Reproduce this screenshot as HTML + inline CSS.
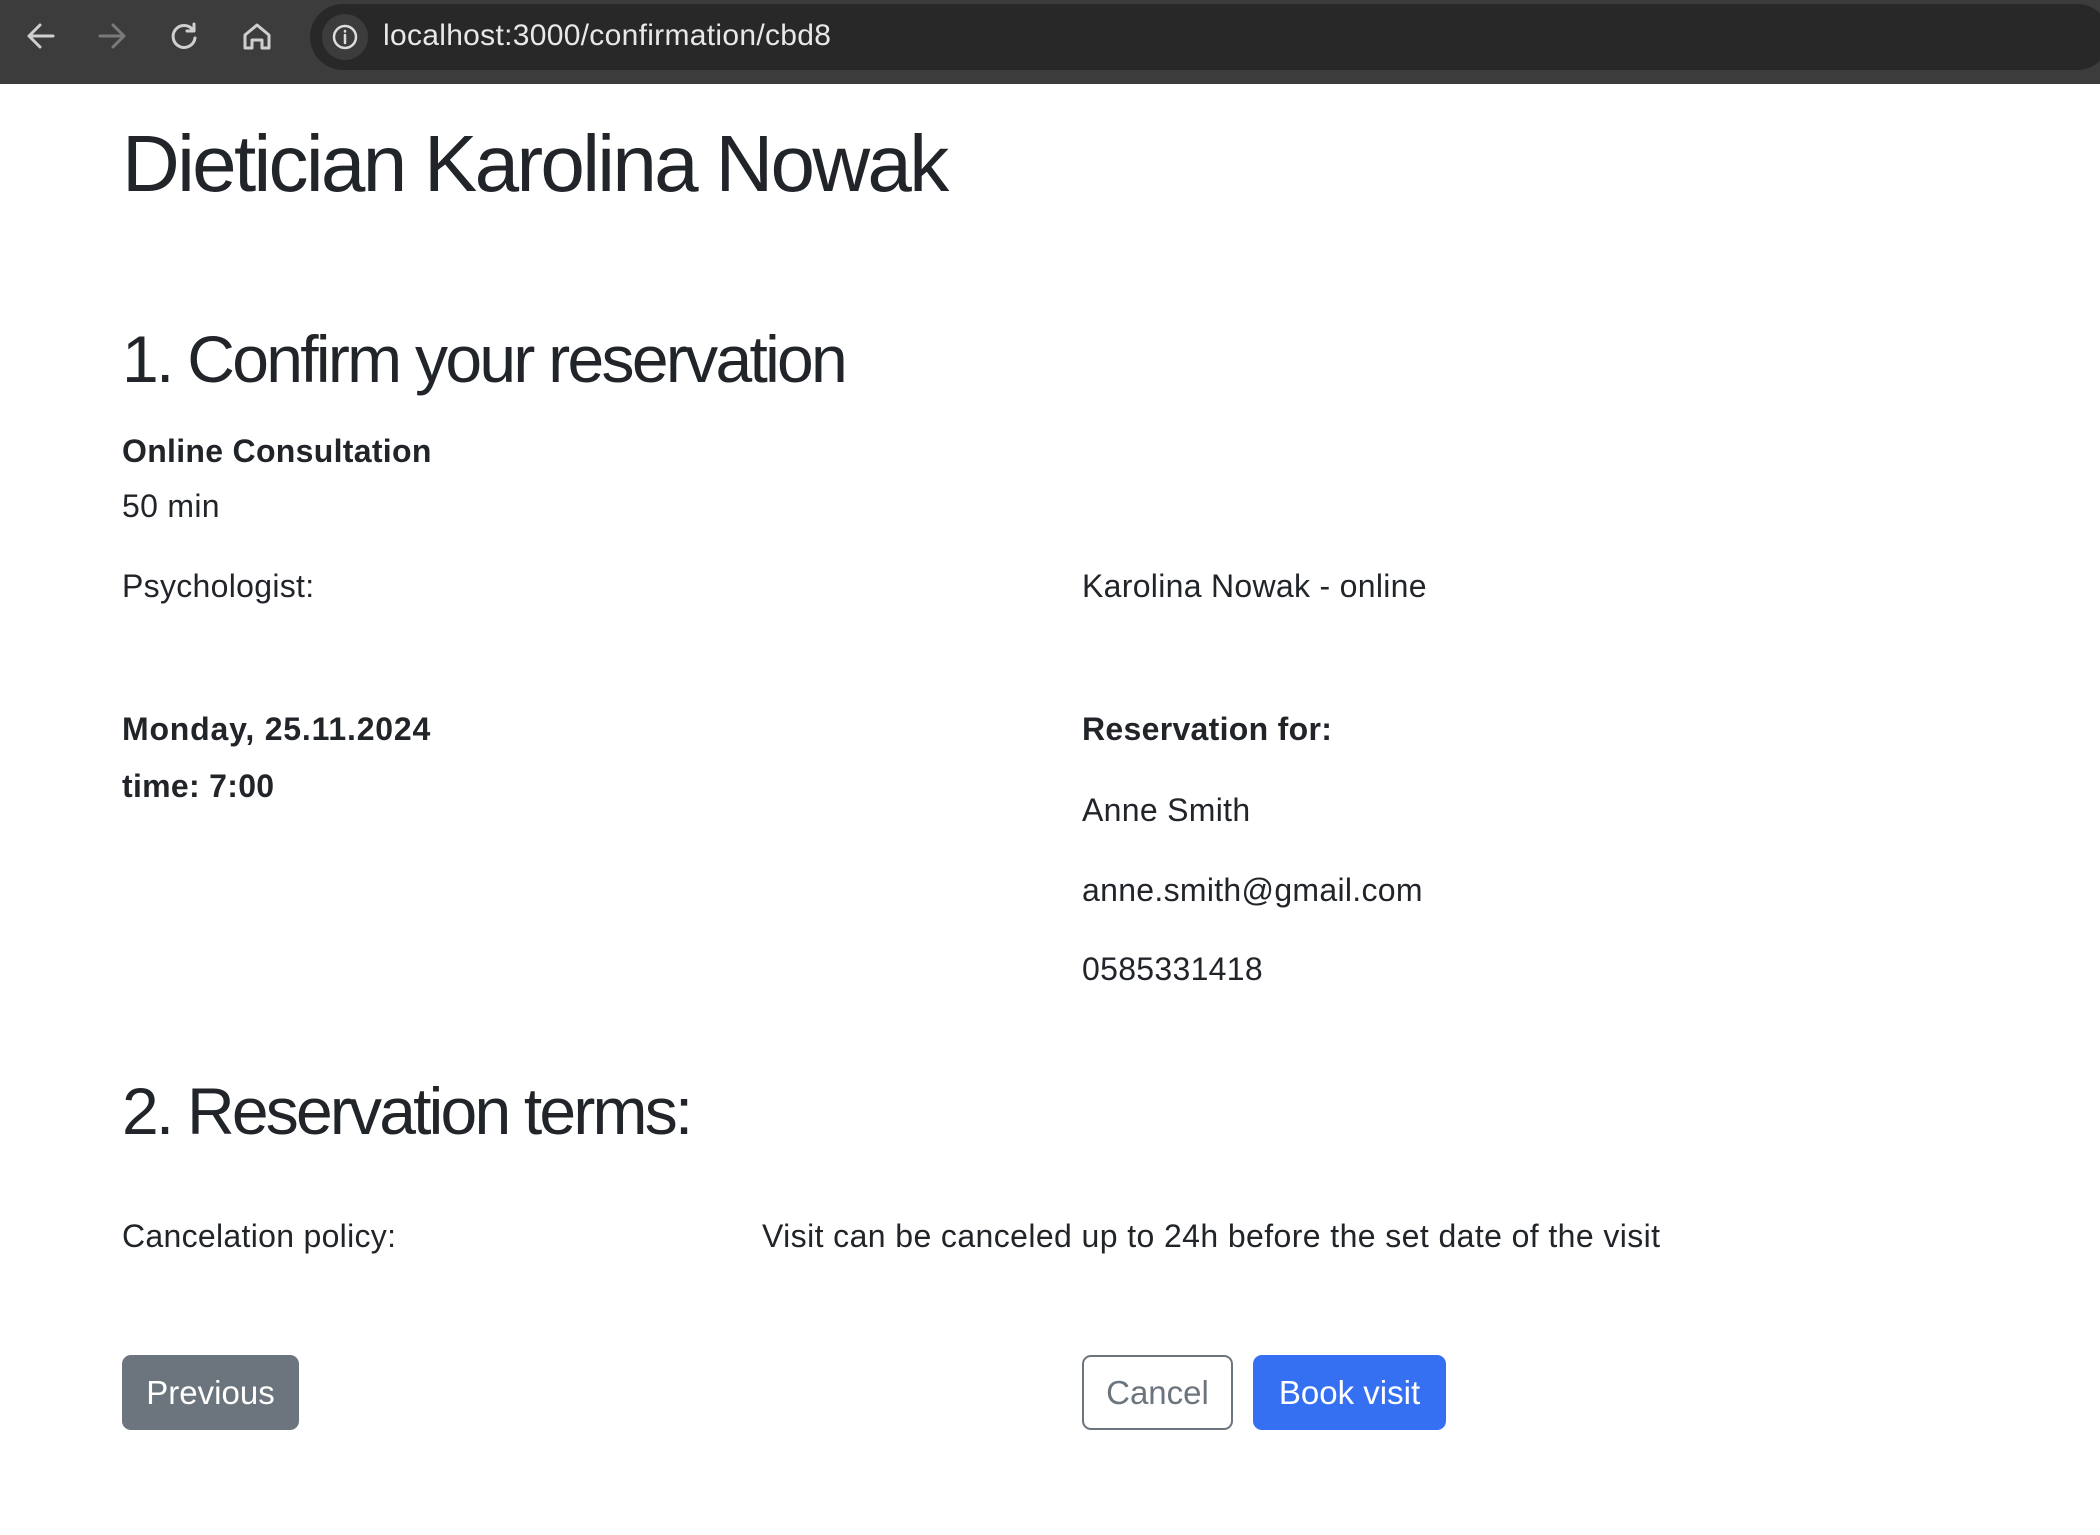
<!DOCTYPE html>
<html><head><meta charset="utf-8"><style>
*{margin:0;padding:0;box-sizing:border-box}
body{width:2100px;height:1535px;background:#fff;font-family:"Liberation Sans",Arial,sans-serif;color:#212529;position:relative;overflow:hidden}
.bar{position:absolute;left:0;top:0;width:2100px;height:84px;background:#3c3c3c}
.pill{position:absolute;left:310px;top:4px;width:1800px;height:66px;border-radius:33px;background:#282828}
.info{position:absolute;left:322px;top:14px;width:46px;height:46px;border-radius:23px;background:#3c3c3c}
.url{position:absolute;left:383px;top:18px;font-size:30px;color:#e8e8e8;line-height:36px;letter-spacing:0.3px}
.t{position:absolute;white-space:nowrap;line-height:1}
.b32{font-size:32px;letter-spacing:0.3px}
.bold{font-weight:bold;letter-spacing:0.3px}
.h{letter-spacing:-2.7px}
.btn{position:absolute;top:1355px;height:75px;border-radius:9px;font-size:33px;display:flex;align-items:center;justify-content:center}
</style></head><body>
<div class="bar">
<svg width="300" height="84" style="position:absolute;left:0;top:0" fill="none" stroke-width="3" stroke-linecap="round" stroke-linejoin="round">
<path d="M53 36H29M40 25L29 36L40 47" stroke="#cfcfcf"/>
<path d="M100 36H124M113 25L124 36L113 47" stroke="#7a7a7a"/>
<path d="M193 30A11 11 0 1 0 195 38M194 24V31H187" stroke="#cfcfcf"/>
<path d="M245 35L257 25L269 35V48H262V40H252V48H245Z" stroke="#cfcfcf"/>
</svg>
<div class="pill"></div>
<div class="info"><svg width="46" height="46"><circle cx="23" cy="23" r="11" fill="none" stroke="#ddd" stroke-width="2.5"/><path d="M23 21V29M23 17V17.5" stroke="#ddd" stroke-width="2.5" stroke-linecap="round"/></svg></div>
<div class="url">localhost:3000/confirmation/cbd8</div>
</div>
<div class="t h" style="left:122px;top:124px;font-size:80px">Dietician Karolina Nowak</div>
<div class="t h" style="left:122px;top:326px;font-size:66px">1. Confirm your reservation</div>
<div class="t b32 bold" style="left:122px;top:435px">Online Consultation</div>
<div class="t b32" style="left:122px;top:490px">50 min</div>
<div class="t b32" style="left:122px;top:570px">Psychologist:</div>
<div class="t b32" style="left:1082px;top:570px">Karolina Nowak - online</div>
<div class="t b32 bold" style="left:122px;top:713px;letter-spacing:0.8px">Monday, 25.11.2024</div>
<div class="t b32 bold" style="left:122px;top:770px">time: 7:00</div>
<div class="t b32 bold" style="left:1082px;top:713px">Reservation for:</div>
<div class="t b32" style="left:1082px;top:794px">Anne Smith</div>
<div class="t b32" style="left:1082px;top:874px">anne.smith@gmail.com</div>
<div class="t b32" style="left:1082px;top:953px">0585331418</div>
<div class="t h" style="left:122px;top:1078px;font-size:66px;letter-spacing:-2.8px">2. Reservation terms:</div>
<div class="t b32" style="left:122px;top:1220px">Cancelation policy:</div>
<div class="t b32" style="left:762px;top:1220px;letter-spacing:0.4px">Visit can be canceled up to 24h before the set date of the visit</div>
<div class="btn" style="left:122px;width:177px;background:#6c757d;color:#fff">Previous</div>
<div class="btn" style="left:1082px;width:151px;border:2px solid #6c757d;color:#6c757d;background:#fff">Cancel</div>
<div class="btn" style="left:1253px;width:193px;background:#3570f3;color:#fff">Book visit</div>
</body></html>
